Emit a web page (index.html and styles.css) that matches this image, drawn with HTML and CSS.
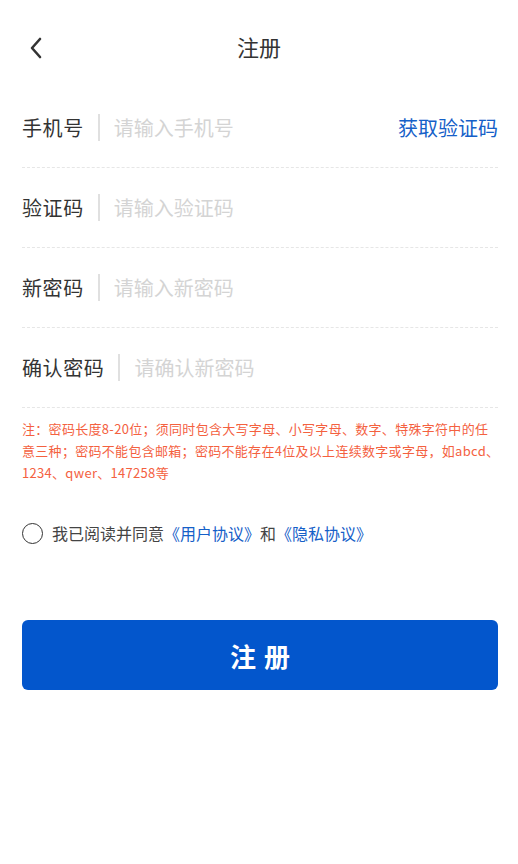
FILE: index.html
```html
<!DOCTYPE html>
<html lang="zh-CN">
<head>
    <meta charset="UTF-8">
    <meta name="viewport" content="width=device-width, initial-scale=1.0">
    <title>注册</title>
    <link rel="stylesheet" href="styles.css">
</head>
<body>
    <div class="nav-bar">
        <a class="nav-back" href="#">
            <svg width="14" height="22" viewBox="0 0 14 22">
                <path d="M11 2 L3 11 L11 20" fill="none" stroke="#333" stroke-width="2.6" stroke-linecap="round" stroke-linejoin="round"/>
            </svg>
        </a>
        <div class="nav-title">注册</div>
    </div>

    <div class="form">
        <div class="form-row">
            <span class="form-label">手机号</span>
            <span class="form-sep"></span>
            <input class="form-input" type="text" placeholder="请输入手机号">
            <a class="get-code" href="#">获取验证码</a>
        </div>
        <div class="form-row">
            <span class="form-label">验证码</span>
            <span class="form-sep"></span>
            <input class="form-input" type="text" placeholder="请输入验证码">
        </div>
        <div class="form-row">
            <span class="form-label">新密码</span>
            <span class="form-sep"></span>
            <input class="form-input" type="password" placeholder="请输入新密码">
        </div>
        <div class="form-row">
            <span class="form-label">确认密码</span>
            <span class="form-sep"></span>
            <input class="form-input" type="password" placeholder="请确认新密码">
        </div>

        <p class="pwd-tip">注：密码长度8-20位；须同时包含大写字母、小写字母、数字、特殊字符中的任<br>意三种；密码不能包含邮箱；密码不能存在4位及以上连续数字或字母，如abcd、1234、qwer、147258等</p>

        <div class="agree">
            <span class="agree-check"></span>
            <span class="agree-text">我已阅读并同意<a href="#">《用户协议》</a>和<a href="#">《隐私协议》</a></span>
        </div>

        <button class="submit-btn">注册</button>
    </div>
</body>
</html>
```

FILE: styles.css
```css
* {
    box-sizing: border-box;
}

body {
    margin: 0;
    background-color: #fff;
    font-family: "Noto Sans CJK SC", "Noto Sans", sans-serif;
    color: #333;
}

a {
    text-decoration: none;
}

.nav-bar {
    position: relative;
    height: 96px;
    padding-top: 24px;
    text-align: center;
}

.nav-back {
    position: absolute;
    left: 26px;
    top: 37px;
    width: 20px;
    height: 24px;
}

.nav-title {
    font-size: 22px;
    line-height: 44px;
    color: #333;
}

.form {
    padding: 0 20px 0 22px;
    margin-top: -8px;
}

.form-row {
    display: flex;
    align-items: center;
    height: 80px;
    border-bottom: 1px dashed #e6e6e6;
}

.form-label {
    font-size: 20px;
    letter-spacing: 0.6px;
    color: #333;
    white-space: nowrap;
}

.form-sep {
    width: 2px;
    height: 27px;
    margin: 0 14px;
    background-color: #e0e0e0;
}

.form-input {
    flex: 1;
    min-width: 0;
    border: none;
    outline: none;
    padding: 0;
    font-family: inherit;
    font-size: 20px;
    color: #333;
    background: transparent;
}

.form-input::placeholder {
    color: #d4d4d4;
}

.get-code {
    font-size: 20px;
    color: #1560c8;
    white-space: nowrap;
}

.pwd-tip {
    margin: 10px -6px 0 0;
    font-size: 13px;
    letter-spacing: 0.3px;
    line-height: 22px;
    color: #f4613f;
}

.agree {
    display: flex;
    align-items: center;
    margin-top: 37px;
}

.agree-check {
    width: 21px;
    height: 21px;
    border: 1.6px solid #333;
    border-radius: 50%;
    margin-right: 9px;
}

.agree-text {
    font-size: 16px;
    color: #444;
}

.agree-text a {
    color: #1560c8;
}

.submit-btn {
    display: block;
    width: 100%;
    height: 70px;
    margin-top: 75px;
    border: none;
    border-radius: 6px;
    background-color: #0356cc;
    color: #fff;
    font-family: inherit;
    font-size: 26px;
    font-weight: bold;
    letter-spacing: 8px;
    text-indent: 8px;
    cursor: pointer;
}
```
